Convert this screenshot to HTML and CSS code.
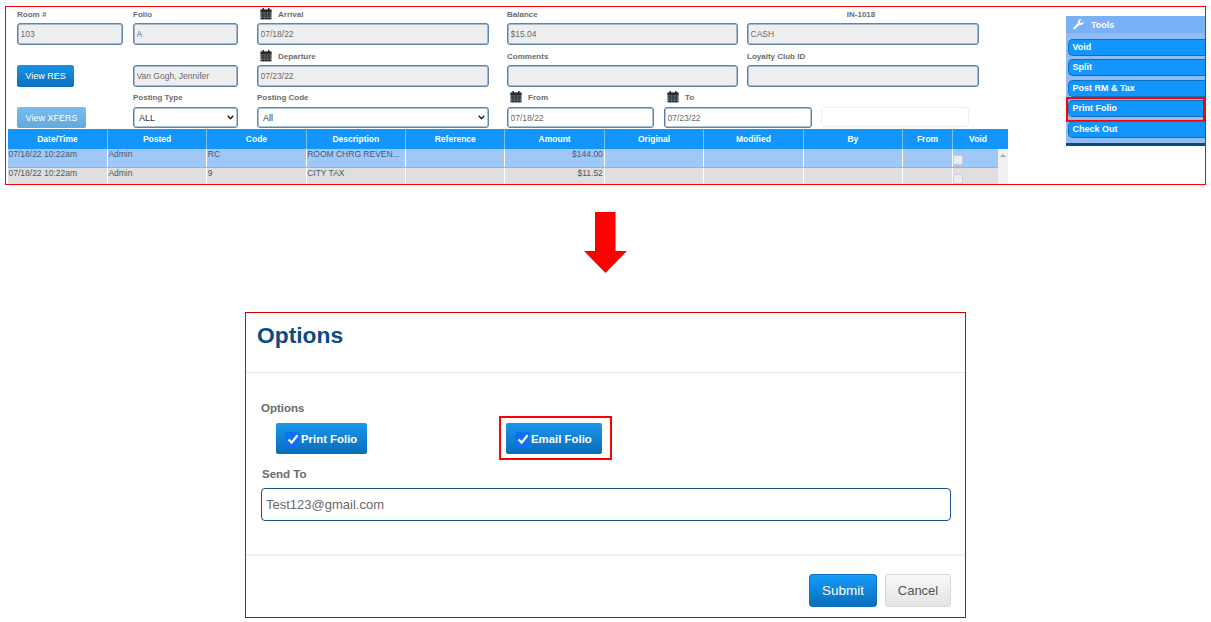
FILE: index.html
```html
<!DOCTYPE html>
<html lang="en">
<head>
<meta charset="utf-8">
<title>Print Folio options</title>
<link rel="stylesheet" href="styles.css">
</head>
<body>
<svg class="defs" width="0" height="0" aria-hidden="true">
  <symbol id="cal" viewBox="0 0 12 12">
    <rect x="0.5" y="1.5" width="11" height="10" fill="#7d8a94"/>
    <rect x="0.5" y="1.5" width="11" height="3" fill="#2b2b2b"/>
    <rect x="2.5" y="0" width="1.5" height="2.5" fill="#2b2b2b"/>
    <rect x="8" y="0" width="1.5" height="2.5" fill="#2b2b2b"/>
    <path d="M0.5 6h11M0.5 8h11M0.5 10.4h11M3 4.5v7M6 4.5v7M9 4.5v7" stroke="#2b2b2b" stroke-width="1"/>
  </symbol>
  <symbol id="check" viewBox="0 0 12 12">
    <path d="M1.5 6.5 4.6 9.6 10.6 2.2" fill="none" stroke="#fff" stroke-width="2.2"/>
  </symbol>
</svg>

<section class="panel">
  <div class="main">
    <div class="row">
      <div class="field w-room"><label class="lbl">Room #</label><input class="inp ro" value="103" readonly></div>
      <div class="field w-folio"><label class="lbl">Folio</label><input class="inp ro" value="A" readonly></div>
      <div class="field w-date"><label class="lbl lbl-ico"><svg class="cal"><use href="#cal"/></svg>Arrival</label><input class="inp ro" value="07/18/22" readonly></div>
      <div class="field w-bal"><label class="lbl">Balance</label><input class="inp ro" value="$15.04" readonly></div>
      <div class="field w-last"><label class="lbl lbl-mid">IN-1018</label><input class="inp ro" value="CASH" readonly></div>
    </div>
    <div class="row">
      <div class="field w-room"><span class="lbl"></span><button class="btn-view">View RES</button></div>
      <div class="field w-folio"><span class="lbl"></span><input class="inp ro" value="Van Gogh, Jennifer" readonly></div>
      <div class="field w-date"><label class="lbl lbl-ico"><svg class="cal"><use href="#cal"/></svg>Departure</label><input class="inp ro" value="07/23/22" readonly></div>
      <div class="field w-bal"><label class="lbl">Comments</label><input class="inp ro" readonly></div>
      <div class="field w-last"><label class="lbl">Loyalty Club ID</label><input class="inp ro" readonly></div>
    </div>
    <div class="row row-3">
      <div class="field w-room"><span class="lbl"></span><button class="btn-view btn-faded">View XFERS</button></div>
      <div class="field w-folio"><label class="lbl">Posting Type</label><select class="inp sel"><option>ALL</option></select></div>
      <div class="field w-date"><label class="lbl">Posting Code</label><select class="inp sel"><option>All</option></select></div>
      <div class="field w-from"><label class="lbl lbl-ico"><svg class="cal"><use href="#cal"/></svg>From</label><input class="inp" value="07/18/22"></div>
      <div class="field w-to"><label class="lbl lbl-ico"><svg class="cal"><use href="#cal"/></svg>To</label><input class="inp" value="07/23/22"></div>
      <div class="field w-blank"><span class="lbl"></span><input class="inp inp-blank"></div>
    </div>
    <div class="grid-wrap">
      <table class="grid">
        <colgroup>
          <col class="c-a"><col class="c-a"><col class="c-a"><col class="c-a"><col class="c-a"><col class="c-a"><col class="c-a"><col class="c-a"><col class="c-a"><col class="c-from"><col class="c-void">
        </colgroup>
        <thead>
          <tr><th>Date/Time</th><th>Posted</th><th>Code</th><th>Description</th><th>Reference</th><th>Amount</th><th>Original</th><th>Modified</th><th>By</th><th>From</th><th class="th-void">Void</th></tr>
        </thead>
        <tbody>
          <tr class="sel-row"><td>07/18/22 10:22am</td><td>Admin</td><td>RC</td><td class="trunc">ROOM CHRG REVEN...</td><td></td><td class="num">$144.00</td><td></td><td></td><td></td><td></td><td class="td-void"><span class="cb"></span></td></tr>
          <tr class="alt-row"><td>07/18/22 10:22am</td><td>Admin</td><td>9</td><td>CITY TAX</td><td></td><td class="num">$11.52</td><td></td><td></td><td></td><td></td><td class="td-void"><span class="cb"></span></td></tr>
        </tbody>
      </table>
      <div class="scroll"><span class="scroll-up"></span></div>
    </div>
  </div>
  <aside class="tools">
    <div class="tools-head">
      <svg class="wrench" viewBox="0 0 12 12"><path d="M11.3 2.6 9.2 4.5 7.6 4.1 7.2 2.6 9.3.6C8 .1 6.700.4 5.900 1.300 5.100 2.200 5 3.400 5.500 4.400L.7 9.300c-.5.5-.5 1.200 0 1.700s1.200.5 1.700 0L7.200 6.200C8.300 6.700 9.600 6.500 10.500 5.700 11.300 4.900 11.600 3.700 11.300 2.600Z" fill="#fff"/></svg>
      <span>Tools</span>
    </div>
    <ul class="tools-list">
      <li class="tool">Void</li>
      <li class="tool">Split</li>
      <li class="tool">Post RM &amp; Tax</li>
      <li class="tool tool-hl">Print Folio</li>
      <li class="tool">Check Out</li>
    </ul>
  </aside>
</section>

<svg class="arrow" viewBox="0 0 43 61" width="43" height="61" aria-hidden="true">
  <path d="M11 0H31.500V39H43L21.500 61 0 39H11Z" fill="#f00"/>
</svg>

<section class="modal">
  <header class="modal-head"><h1>Options</h1></header>
  <div class="modal-body">
    <div class="m-label">Options</div>
    <div class="opts">
      <button class="opt opt-print"><span class="tick"><svg><use href="#check"/></svg></span>Print Folio</button>
      <button class="opt opt-email"><span class="tick"><svg><use href="#check"/></svg></span>Email Folio</button>
    </div>
    <label class="m-label m-send">Send To</label>
    <input class="send" value="Test123@gmail.com">
  </div>
  <footer class="modal-foot">
    <button class="submit">Submit</button>
    <button class="cancel">Cancel</button>
  </footer>
</section>
</body>
</html>
```
FILE: styles.css
```css
* { box-sizing: border-box; }
html, body { margin: 0; padding: 0; }
body { width: 1211px; height: 622px; overflow: hidden; background: #fff; font-family: "Liberation Sans", Arial, sans-serif; }
.defs { position: absolute; }

.panel { display: flex; width: 1201px; height: 179px; margin: 6px 0 0 5px; border: 1px solid #f00; overflow: hidden; }
.main { width: 1002px; flex: none; }
.row { display: flex; padding-left: 11px; margin-bottom: 4px; }
.row-3 { margin-bottom: 1px; }
.field { display: flex; flex-direction: column; flex: none; }
.w-room { width: 106px; margin-right: 10px; }
.w-folio { width: 105px; margin-right: 19px; }
.w-date { width: 232px; margin-right: 18px; }
.w-bal { width: 231px; margin-right: 9px; }
.w-last { width: 232px; }
.w-from { width: 147px; margin-right: 10px; }
.w-to { width: 148px; margin-right: 9px; }
.w-blank { width: 148px; }

.lbl { display: flex; align-items: center; height: 16px; padding-bottom: 2px; font-size: 8px; font-weight: 700; color: #6c6c6c; }
.row-3 .lbl { padding-bottom: 4px; }
.lbl-ico { padding-left: 3px; }
.lbl-mid { justify-content: center; padding-right: 4px; }
.cal { width: 12px; height: 12px; margin-right: 6px; }
.inp { width: 100%; height: 22px; padding: 0 2.500px; border: 1px solid #5b85ad; border-radius: 3px; background: #fff; font: 8.500px "Liberation Sans", Arial, sans-serif; color: #6a6a6a; outline: none; box-shadow: inset 0 0 0 .5px #5b85ad; }
.row-3 .inp { height: 21px; }
.ro { background: #eee; }
.sel { appearance: none; -webkit-appearance: none; padding-left: 5px; color: #333; font-size: 9px; background-image: url("data:image/svg+xml,%3Csvg xmlns='http://www.w3.org/2000/svg' width='7' height='5'%3E%3Cpath d='M.7.8 3.500 3.600 6.300.8' fill='none' stroke='%23222' stroke-width='1.500'/%3E%3C/svg%3E"); background-repeat: no-repeat; background-position: right 3px center; }
.row-3 .inp-blank { border-color: #eee; box-shadow: none; height: 20px; margin-top: 0; }
.btn-view { width: 57px; height: 22px; padding: 0; border: 0; border-radius: 2px; background: linear-gradient(#1a93ea, #0a6fbd); color: #fff; font: 9px "Liberation Sans", Arial, sans-serif; }
.btn-faded { width: 69px; height: 21px; background: linear-gradient(#78bdf0, #62a9de); }

.grid-wrap { position: relative; margin-left: 2px; width: 1000px; }
.grid { width: 1000px; border-collapse: collapse; table-layout: fixed; font-size: 8.500px; }
.c-a { width: 99.400px; }
.c-from { width: 50px; }
.c-void { width: 55.400px; }
.grid th { height: 20px; padding: 0; background: #1296fd; color: #fff; font-size: 8.500px; font-weight: 700; border-left: 1px solid #7cc0f7; }
.grid th:first-child { border-left: 0; }
.grid .th-void { padding-right: 5px; }
.grid td { height: 18px; padding: 0 1px 0 .5px; vertical-align: top; color: #3f5c7c; border-left: 1px solid rgba(255,255,255,.35); white-space: nowrap; overflow: hidden; }
.grid td:first-child { border-left: 0; }
.sel-row td { background: #9fc8f9; border-bottom: 1px solid #8db3df; }
.alt-row td { background: #dfdfdf; color: #4a5a6a; }
.grid .num { text-align: right; }
.grid .td-void { padding-left: 0; }
.cb { display: block; width: 10px; height: 10px; margin-top: 6px; background: #e6edf5; border: 1px solid #ccd; border-radius: 1px; }
.scroll { position: absolute; right: 0; top: 20px; width: 10px; height: 40px; background: #f1f1f1; }
.scroll-up { display: block; width: 0; height: 0; margin: 5px auto 0; border: 3px solid transparent; border-top: 0; border-bottom: 3px solid #a8a8a8; }

.tools { position: relative; flex: none; width: 139px; height: 130px; margin: 9px 0 0 58px; background: #8fbcf3; border-bottom: 3px solid #0d4b85; }
.tools-head { display: flex; align-items: center; gap: 7px; height: 17px; padding-left: 7px; background: #7ab0f5; color: #fff; font-size: 9px; font-weight: 700; }
.wrench { width: 11px; height: 11px; }
.tools-list { display: flex; flex-direction: column; gap: 3.500px; margin: 5.500px 0 0; padding: 0 0 0 2px; list-style: none; }
.tool { position: relative; height: 17px; padding-left: 3.500px; line-height: 15px; border: 1px solid #0e70bf; border-right: 0; border-radius: 5px 0 0 5px; background: #1296fd; color: #fff; font-size: 9px; font-weight: 700; }
.tool-hl::after { content: ""; position: absolute; left: -3px; right: 0; top: -4px; bottom: -6px; border: 2px solid #f00; pointer-events: none; }

.arrow { display: block; margin: 27px 0 0 584px; }

.modal { display: flex; flex-direction: column; width: 721px; height: 306px; margin: 39px 0 0 245px; border: 1px solid #d40000; }
.modal-head { height: 60px; border-bottom: 1px solid #e5e5e5; padding: 9px 0 0 11px; }
.modal-head h1 { margin: 0; font-size: 22.800px; line-height: 26px; font-weight: 700; color: #0b4a85; }
.modal-body { flex: 1; padding: 28px 14px 0 15px; }
.m-label { font-size: 11.500px; line-height: 14px; font-weight: 700; color: #6a6a6a; }
.opts { display: flex; margin: 8px 0 13px 15px; }
.opt { display: flex; align-items: center; height: 31px; padding: 1px 9px 0; border: 0; border-radius: 2px; background: linear-gradient(#1a96ee, #0a6db8); color: #fff; font: 700 11.400px "Liberation Sans", Arial, sans-serif; }
.opt-print { width: 91px; }
.opt-email { position: relative; width: 96px; margin-left: 139px; }
.opt-email::after { content: ""; position: absolute; left: -7px; right: -10px; top: -7px; bottom: -6px; border: 2px solid #f00; pointer-events: none; }
.tick { display: block; width: 15px; height: 15px; margin-right: 1px; padding: 1.500px; border-radius: 2px; background: #0e70f5; flex: none; }
.tick svg { display: block; width: 12px; height: 12px; }
.m-send { display: block; margin-left: 1px; }
.send { display: block; width: 690px; height: 33px; margin: 7px 0 0 0; padding: 0 4px; border: 1.500px solid #1b5288; border-radius: 4px; background: #fff; font: 13px "Liberation Sans", Arial, sans-serif; color: #6a6a6a; outline: none; }
.modal-foot { display: flex; justify-content: flex-end; gap: 8px; height: 63px; padding: 18px 14px 0 0; border-top: 2px solid #f1f1f1; }
.submit, .cancel { height: 33px; padding: 0; border-radius: 3px; font: 13.500px "Liberation Sans", Arial, sans-serif; }
.submit { width: 68px; border: 1px solid #0d75bf; background: linear-gradient(#159bf8, #0a6fba); color: #fff; }
.cancel { width: 66px; border: 1px solid #d8d8d8; background: linear-gradient(#f8f8f8, #e4e4e4); color: #555; font-size: 13px; }
```
